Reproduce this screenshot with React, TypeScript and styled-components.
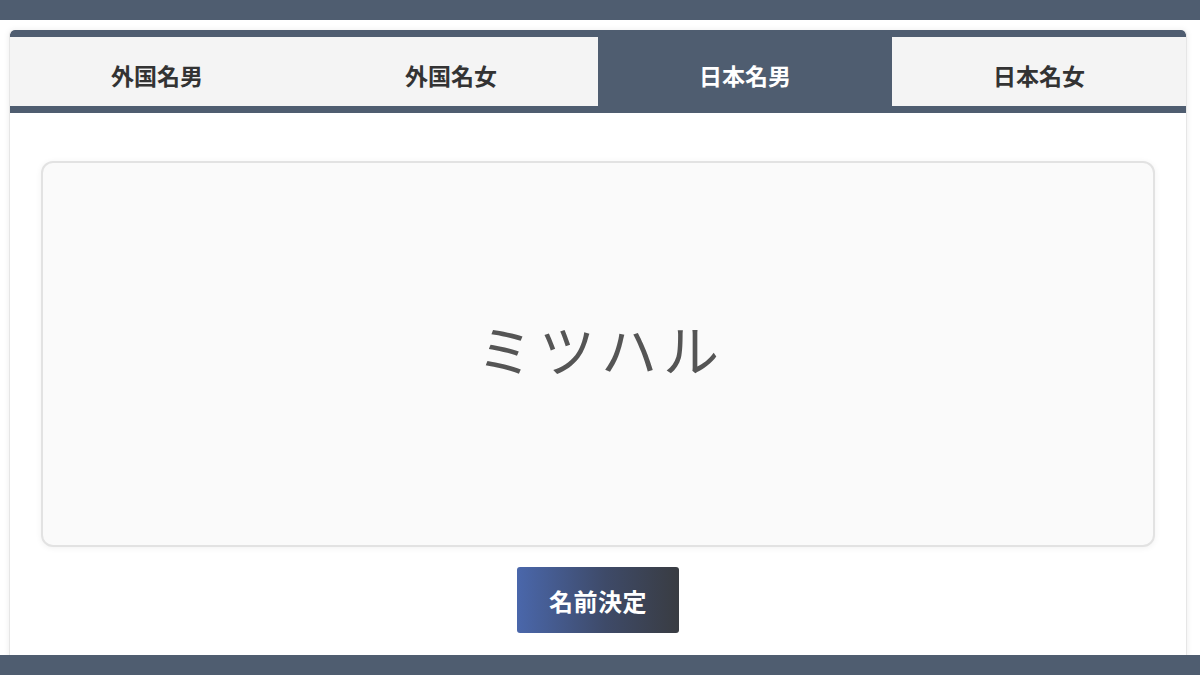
import React, { useState } from "react";
import styled, { createGlobalStyle } from "styled-components";

const Global = createGlobalStyle`
  html, body { margin: 0; padding: 0; background: #ffffff; }
  body { font-family: "Noto Sans CJK JP", "Noto Sans", sans-serif; }
  * { box-sizing: border-box; }
`;

const Page = styled.div`
  width: 1200px;
  height: 675px;
  display: flex;
  flex-direction: column;
  overflow: hidden;
  background: #ffffff;
`;

const Bar = styled.div`
  height: 20px;
  flex: 0 0 20px;
  background: #4f5d70;
`;

const Main = styled.main`
  flex: 1;
  overflow: hidden;
  padding: 10px 13px 0 9px;
`;

const Card = styled.section`
  background: #ffffff;
  border-radius: 5px 5px 0 0;
  border: 1px solid #e6e6e6;
  border-top: none;
  box-shadow: 0 0 6px rgba(0, 0, 0, 0.08);
  height: 700px;
  overflow: hidden;
`;

const Tabs = styled.nav`
  display: grid;
  grid-template-columns: repeat(4, 1fr);
  border-top: 7px solid #4f5d70;
  border-bottom: 7px solid #4f5d70;
  border-radius: 5px 5px 0 0;
  background: #4f5d70;
`;

const Tab = styled.button<{ $active: boolean }>`
  height: 69px;
  border: none;
  margin: 0;
  padding: 0;
  background: ${(p) => (p.$active ? "#4f5d70" : "#f4f4f4")};
  color: ${(p) => (p.$active ? "#ffffff" : "#333333")};
  font-family: "Noto Sans CJK JP", "Noto Sans", sans-serif;
  font-weight: 700;
  font-size: 23px;
  display: flex;
  align-items: center;
  justify-content: center;
  padding-top: 7px;
  cursor: pointer;
`;

const Body = styled.div`
  padding: 48px 31px 0 31px;
  display: flex;
  flex-direction: column;
  align-items: center;
`;

const NameBox = styled.div`
  width: 100%;
  height: 386px;
  border: 2px solid #e2e2e2;
  border-radius: 12px;
  background: #fafafa;
  box-shadow: 0 1px 6px rgba(0, 0, 0, 0.06);
  display: flex;
  align-items: center;
  justify-content: center;
`;

const NameText = styled.div`
  font-family: "Noto Sans CJK JP", serif;
  font-weight: 400;
  font-size: 56px;
  letter-spacing: 6px;
  color: #555555;
  padding-bottom: 14px;
  padding-left: 6px;
`;

const DecideButton = styled.button`
  margin-top: 20px;
  width: 162px;
  height: 66px;
  border: none;
  border-radius: 3px;
  background: linear-gradient(90deg, #4a67ab 0%, #3e4a68 55%, #393c42 100%);
  color: #ffffff;
  font-family: "Noto Sans CJK JP", "Noto Sans", sans-serif;
  font-weight: 700;
  font-size: 24px;
  letter-spacing: 0.5px;
  cursor: pointer;
`;

const tabs = ["外国名男", "外国名女", "日本名男", "日本名女"];

export default function App() {
  const [active, setActive] = useState(2);
  return (
    <Page>
      <Global />
      <Bar />
      <Main>
        <Card>
          <Tabs>
            {tabs.map((t, i) => (
              <Tab key={t} $active={i === active} onClick={() => setActive(i)}>
                {t}
              </Tab>
            ))}
          </Tabs>
          <Body>
            <NameBox>
              <NameText>ミツハル</NameText>
            </NameBox>
            <DecideButton>名前決定</DecideButton>
          </Body>
        </Card>
      </Main>
      <Bar />
    </Page>
  );
}
